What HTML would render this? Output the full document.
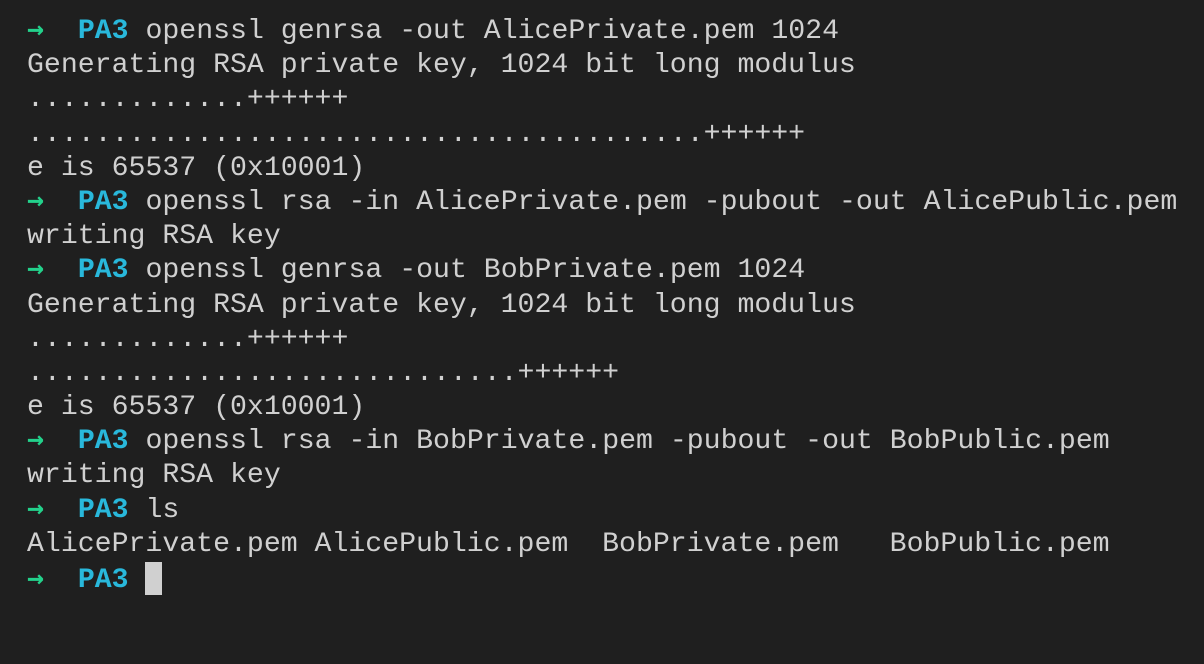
<!DOCTYPE html>
<html><head><meta charset="utf-8"><style>
html,body{margin:0;background:#1f1f1f;width:1204px;height:664px;overflow:hidden}
.t{position:absolute;left:27px;top:15px;font-family:"Liberation Mono","DejaVu Sans Mono",monospace;font-size:28.2px;color:#d0d0d0}
.t div{height:34.2px;line-height:34px;white-space:pre}
.a{color:#23d18b;display:inline-block;width:1ch;font-family:"DejaVu Sans Mono",monospace;font-weight:bold;line-height:20px}
.p{color:#29b8db;font-weight:bold}
.c{display:inline-block;width:17px;height:33px;background:#d0d0d0;vertical-align:-8px}
</style></head><body><div class="t">
<div><span class="a">→</span>  <span class="p">PA3</span> openssl genrsa -out AlicePrivate.pem 1024</div>
<div>Generating RSA private key, 1024 bit long modulus</div>
<div>.............++++++</div>
<div>........................................++++++</div>
<div>e is 65537 (0x10001)</div>
<div><span class="a">→</span>  <span class="p">PA3</span> openssl rsa -in AlicePrivate.pem -pubout -out AlicePublic.pem</div>
<div>writing RSA key</div>
<div><span class="a">→</span>  <span class="p">PA3</span> openssl genrsa -out BobPrivate.pem 1024</div>
<div>Generating RSA private key, 1024 bit long modulus</div>
<div>.............++++++</div>
<div>.............................++++++</div>
<div>e is 65537 (0x10001)</div>
<div><span class="a">→</span>  <span class="p">PA3</span> openssl rsa -in BobPrivate.pem -pubout -out BobPublic.pem</div>
<div>writing RSA key</div>
<div><span class="a">→</span>  <span class="p">PA3</span> ls</div>
<div>AlicePrivate.pem AlicePublic.pem  BobPrivate.pem   BobPublic.pem</div>
<div><span class="a">→</span>  <span class="p">PA3</span> <span class="c"></span></div>
</div></body></html>
